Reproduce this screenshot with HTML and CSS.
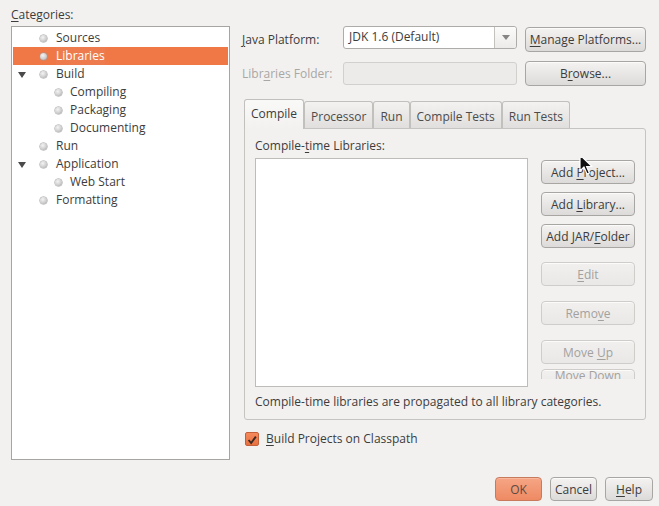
FILE: index.html
```html
<!DOCTYPE html>
<html lang="en">
<head>
  <meta charset="UTF-8" />
  <title>Project Properties - Libraries</title>
  <link rel="stylesheet" href="styles.css">
</head>
<body>

<div class="dialog">
  <div class="main">
    <div class="left">
      <div class="cat-label"><u>C</u>ategories:</div>
      <div class="tree">
        <div class="node lvl1"><span class="tw"></span><span class="dot"></span>Sources</div>
        <div class="node lvl1 selected"><span class="tw"></span><span class="dot"></span><span class="sel-text">Libraries</span></div>
        <div class="node lvl1"><span class="tw open"></span><span class="dot"></span>Build</div>
        <div class="node lvl2"><span class="tw"></span><span class="dot"></span>Compiling</div>
        <div class="node lvl2"><span class="tw"></span><span class="dot"></span>Packaging</div>
        <div class="node lvl2"><span class="tw"></span><span class="dot"></span>Documenting</div>
        <div class="node lvl1"><span class="tw"></span><span class="dot"></span>Run</div>
        <div class="node lvl1"><span class="tw open"></span><span class="dot"></span>Application</div>
        <div class="node lvl2"><span class="tw"></span><span class="dot"></span>Web Start</div>
        <div class="node lvl1"><span class="tw"></span><span class="dot"></span>Formatting</div>
      </div>
    </div>

    <div class="right">
      <div class="form-row">
        <label class="field-label"><u>J</u>ava Platform:</label>
        <div class="combo">
          <div class="combo-text">JDK 1.6 (Default)</div>
          <div class="combo-arrow"><span class="tri"></span></div>
        </div>
        <button class="btn wide"><u>M</u>anage Platforms...</button>
      </div>
      <div class="form-row row2">
        <label class="field-label disabled">Libr<u>a</u>ries Folder:</label>
        <div class="text-field disabled"></div>
        <button class="btn wide">B<u>r</u>owse...</button>
      </div>

      <div class="tabs">
        <div class="tab active">Compile</div>
        <div class="tab">Processor</div>
        <div class="tab">Run</div>
        <div class="tab">Compile Tests</div>
        <div class="tab">Run Tests</div>
      </div>
      <div class="tab-panel">
        <div class="panel-label">Compile-<u>t</u>ime Libraries:</div>
        <div class="panel-body">
          <div class="list"></div>
          <div class="side-buttons">
            <button class="btn side"><span class="hover-wrap">Add <u>P</u>roject...<svg class="cursor" width="14" height="22" viewBox="0 0 14 22"><path d="M1 1 L1 17 L5 13 L8 20 L10.5 19 L7.5 12.5 L13 12.5 Z" fill="#111" stroke="#fff" stroke-width="1.2" stroke-linejoin="round"/></svg></span></button>
            <button class="btn side">Add <u>L</u>ibrary...</button>
            <button class="btn side">Add JAR/<u>F</u>older</button>
            <button class="btn side off gap-edit"><u>E</u>dit</button>
            <button class="btn side off gap-more">Remo<u>v</u>e</button>
            <button class="btn side off gap-more">Move <u>U</u>p</button>
            <button class="btn side off squashed">Move Down</button>
          </div>
        </div>
        <div class="panel-note">Compile-time libraries are propagated to all library categories.</div>
      </div>

      <div class="check-row">
        <span class="checkbox"><svg width="14" height="14" viewBox="0 0 14 14"><path d="M3 7 L6 10.5 L11.5 3" fill="none" stroke="#3a2a24" stroke-width="2.2"/></svg></span>
        <span><u>B</u>uild Projects on Classpath</span>
      </div>
    </div>
  </div>

  <div class="footer">
    <button class="btn foot ok">OK</button>
    <button class="btn foot">Cancel</button>
    <button class="btn foot help"><u>H</u>elp</button>
  </div>
</div>

</body>
</html>
```

FILE: styles.css
```css
html, body {
  margin: 0;
  padding: 0;
}

body {
  font-family: "Open Sans", "Noto Sans", sans-serif;
  font-size: 12px;
  color: #3c3c3c;
  background: #f2f1f0;
}

u {
  text-decoration: underline;
  text-underline-offset: 2px;
}

.dialog {
  width: 659px;
  height: 506px;
  box-sizing: border-box;
  padding: 7px 6px 0 11px;
  display: flex;
  flex-direction: column;
}

.main {
  display: flex;
  gap: 12px;
  padding-right: 7px;
}

/* left: categories tree */
.left {
  width: 219px;
  flex: none;
}

.cat-label {
  height: 19px;
  line-height: 16px;
}

.tree {
  height: 434px;
  box-sizing: border-box;
  background: #fff;
  border: 1px solid #a7a5a2;
  padding: 2px 1px 1px;
}

.node {
  height: 18px;
  line-height: 18px;
  display: flex;
  align-items: center;
  white-space: nowrap;
}

.node .tw {
  width: 10px;
  height: 10px;
  margin-left: 4px;
  position: relative;
}

.node .tw.open::after {
  content: "";
  position: absolute;
  left: 1px;
  top: 3px;
  border-left: 4px solid transparent;
  border-right: 4px solid transparent;
  border-top: 6px solid #4a4a4a;
}

.node .dot {
  width: 7px;
  height: 7px;
  border-radius: 50%;
  background: radial-gradient(circle at 40% 35%, #f4f4f4 0, #cfcfcf 55%, #9a9a9a 100%);
  box-shadow: 0 0 0 0.5px #9c9c9c;
  margin-right: 9px;
}

.lvl1 .dot {
  margin-left: 13px;
}

.lvl2 .dot {
  margin-left: 28px;
  margin-right: 8px;
}

.node.selected {
  background: #f07746;
  color: #fff;
}

.sel-text {
  background: #ee7b4d;
}

/* right side */
.right {
  flex: 1;
  padding-top: 19px;
}

.form-row {
  display: flex;
  align-items: center;
  height: 26px;
}

.form-row.row2 {
  margin-top: 9px;
  height: 24px;
}

.field-label {
  width: 101px;
  flex: none;
}

.field-label.disabled {
  color: #a9a7a4;
}

.combo {
  width: 174px;
  height: 23px;
  box-sizing: border-box;
  display: flex;
  align-self: flex-start;
  border: 1px solid #aeaca9;
  border-radius: 3px;
  background: #fff;
  margin-right: 8px;
}

.combo-text {
  flex: 1;
  padding: 0 5px;
  line-height: 20px;
  border-right: 1px solid #c4c2bf;
}

.combo-arrow {
  width: 21px;
  background: linear-gradient(#fbfbfa, #ecebea);
  border-radius: 0 3px 3px 0;
  display: flex;
  align-items: center;
  justify-content: center;
}

.combo-arrow .tri {
  border-left: 4px solid transparent;
  border-right: 4px solid transparent;
  border-top: 5px solid #858585;
}

.text-field {
  width: 174px;
  height: 23px;
  box-sizing: border-box;
  border: 1px solid #d2d0cd;
  border-radius: 3px;
  background: #ecebea;
  margin-right: 8px;
}

.btn {
  font-family: inherit;
  font-size: 12px;
  color: #3c3c3c;
  border: 1px solid #a8a6a3;
  border-radius: 4px;
  background: linear-gradient(#f4f3f2, #dddbd9);
  box-shadow: inset 0 1px 0 #fbfbfa;
  padding: 0;
  height: 24px;
  box-sizing: border-box;
}

.btn.wide {
  width: 121px;
  height: 25px;
}

.tabs {
  display: flex;
  align-items: flex-end;
  margin-top: 13px;
  margin-left: 2px;
  height: 30px;
}

.tab {
  height: 27px;
  box-sizing: border-box;
  padding: 6px 6px 0;
  border: 1px solid #c2c0bd;
  border-bottom: none;
  border-radius: 3px 3px 0 0;
  background: linear-gradient(#f3f2f1, #e0dfdd);
  color: #4c4c4c;
}

.tab.active {
  height: 30px;
  padding-top: 5px;
  background: linear-gradient(#f9f9f8, #f2f1f0);
  margin-bottom: -1px;
  position: relative;
  color: #3c3c3c;
}

.tab-panel {
  margin-left: 2px;
  height: 292px;
  box-sizing: border-box;
  border: 1px solid #c6c4c1;
  border-radius: 0 3px 3px 3px;
  padding: 8px 0 0 10px;
}

.panel-label {
  height: 21px;
  line-height: 18px;
}

.panel-body {
  display: flex;
  gap: 13px;
}

.list {
  width: 273px;
  height: 229px;
  box-sizing: border-box;
  background: #fff;
  border: 1px solid #bebcb9;
}

.side-buttons {
  height: 219px;
  padding-top: 2px;
  overflow: hidden;
  display: flex;
  flex-direction: column;
  gap: 8px;
}

.btn.side {
  width: 94px;
  flex: none;
}

.btn.off {
  color: #a3a19e;
  border-color: #cfcdca;
  background: linear-gradient(#f1f0ef, #e9e8e7);
}

.btn.gap-edit {
  margin-top: 6px;
}

.btn.gap-more {
  margin-top: 7px;
}

.btn.squashed {
  margin-top: -3px;
  line-height: 12px;
  display: flex;
  justify-content: center;
  align-items: flex-start;
  padding-top: 0;
}

.hover-wrap {
  position: relative;
}

.cursor {
  position: absolute;
  left: 28px;
  top: -10px;
}

.panel-note {
  margin-top: 7px;
  line-height: 16px;
}

.check-row {
  display: flex;
  align-items: center;
  gap: 7px;
  margin-top: 10px;
  margin-left: 3px;
}

.checkbox {
  width: 14px;
  height: 14px;
  box-sizing: border-box;
  border: 1px solid #c3603a;
  border-radius: 2px;
  background: linear-gradient(#f58a5c, #e8703f);
  display: flex;
}

.footer {
  display: flex;
  justify-content: flex-end;
  gap: 8px;
  margin-top: 17px;
}

.btn.foot {
  width: 47px;
}

.btn.foot.help {
  width: 48px;
}

.btn.ok {
  background: linear-gradient(#f6a585, #ee8a63);
  border-color: #c77a5c;
  box-shadow: inset 0 1px 0 #f8b89e;
  color: #5b4a44;
}
```
